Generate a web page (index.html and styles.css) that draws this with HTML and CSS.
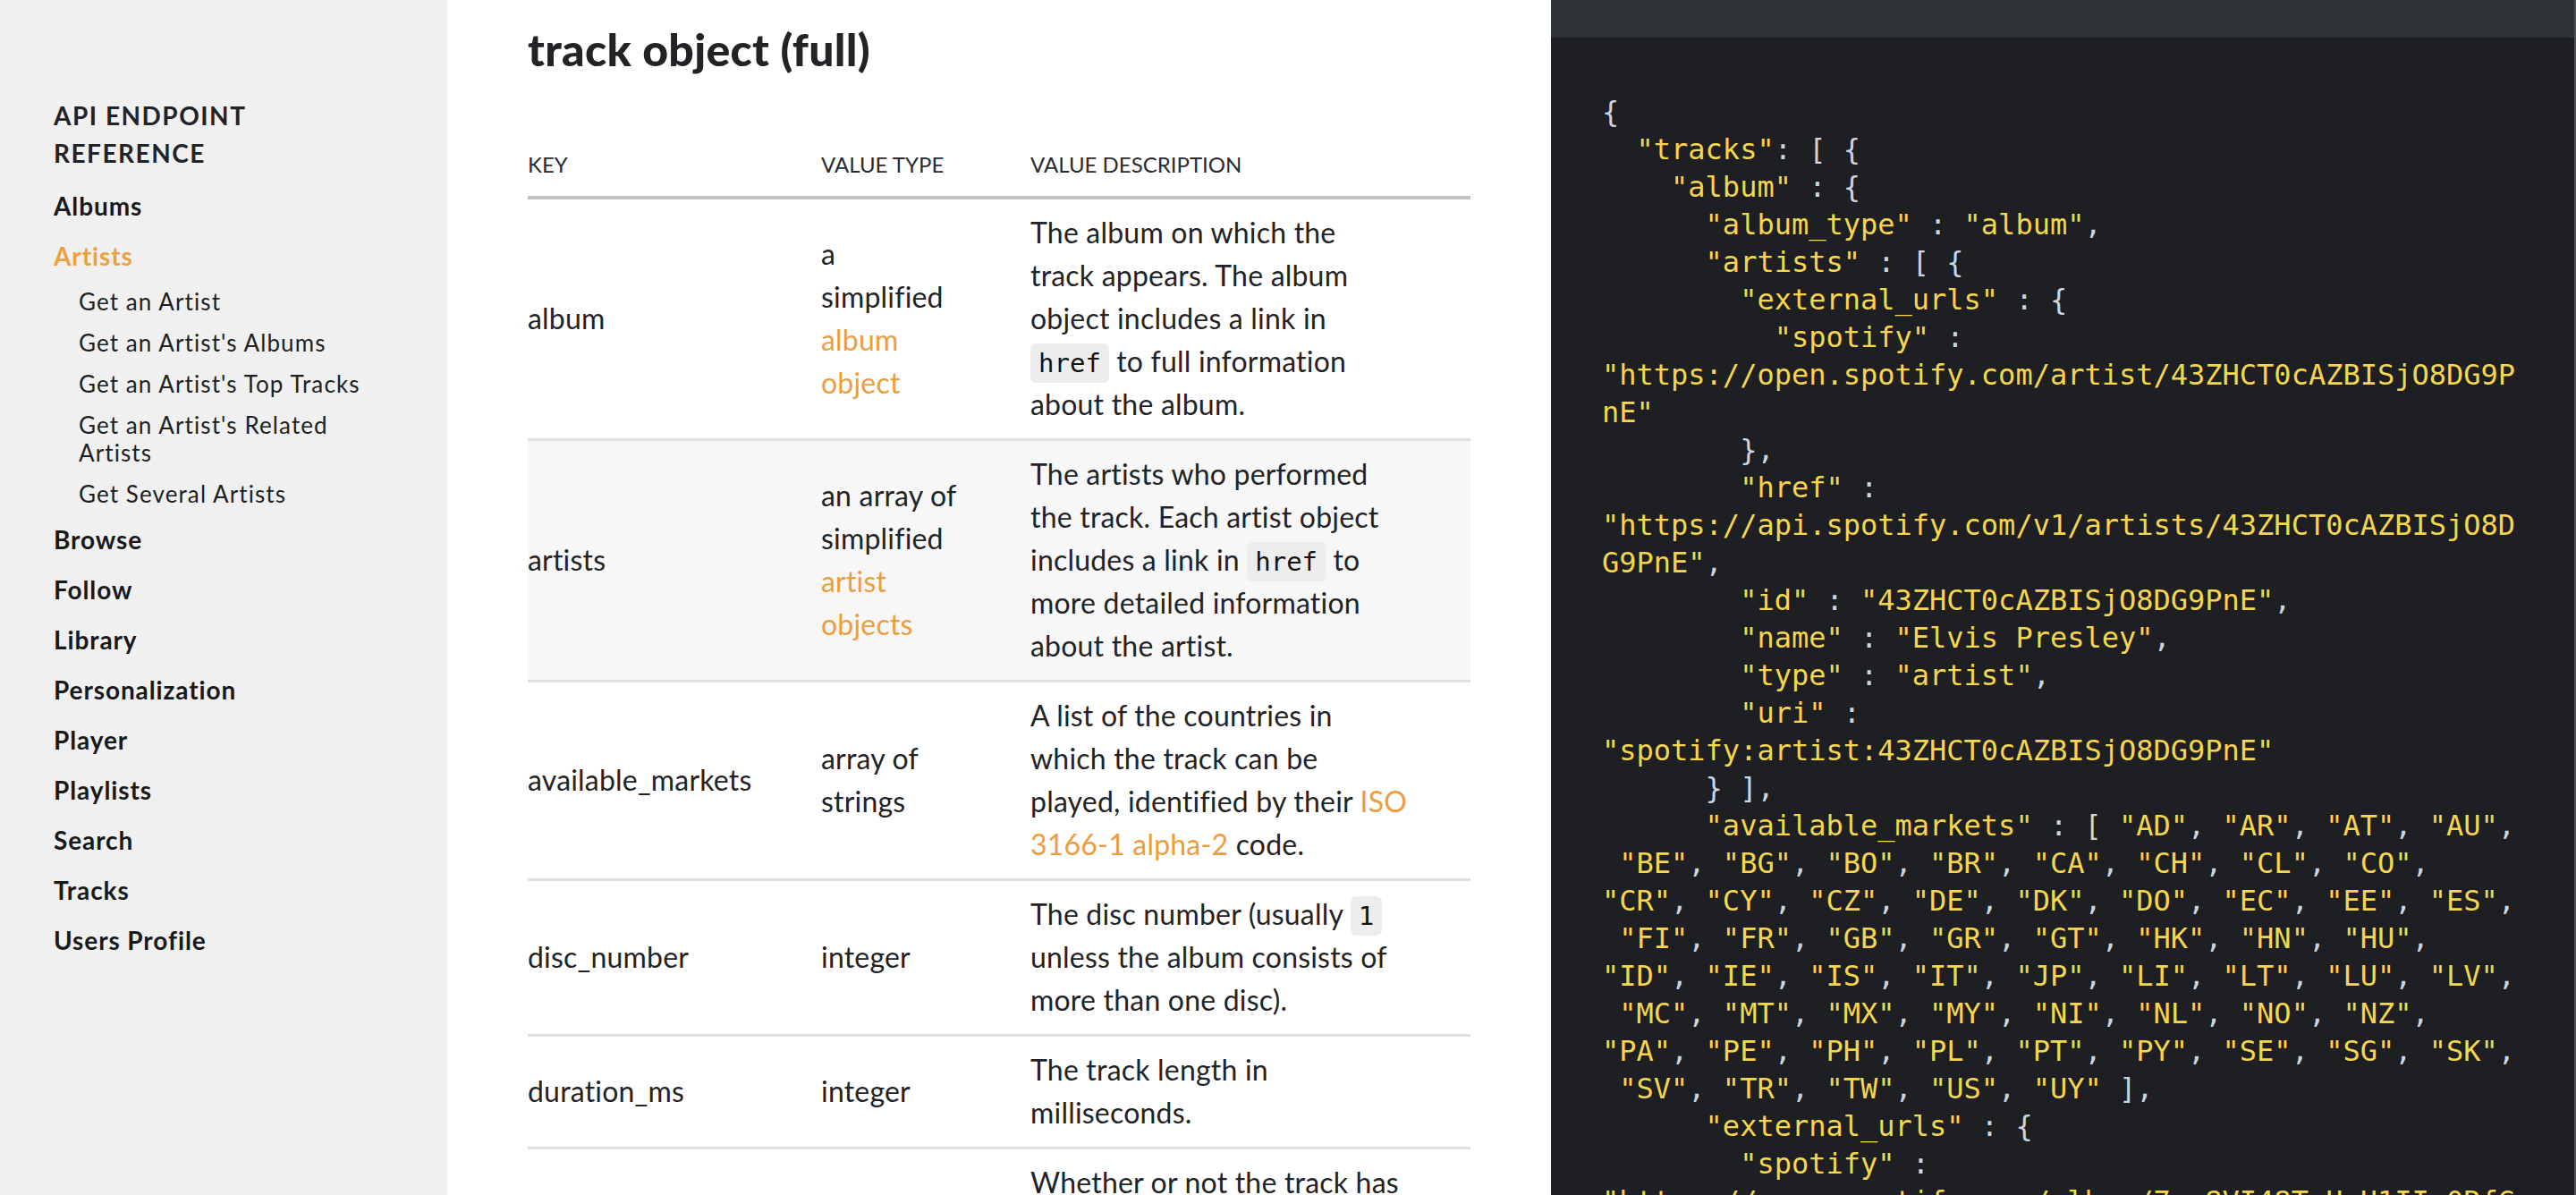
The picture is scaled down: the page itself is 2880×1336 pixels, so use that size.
FILE: index.html
```html
<!DOCTYPE html>
<html lang="en">
<head>
<meta charset="utf-8">
<title>track object (full)</title>
<link rel="stylesheet" href="styles.css">
</head>
<body>
<div class="page">
  <aside class="sidebar">
    <h2 class="side-title">API ENDPOINT REFERENCE</h2>
    <ul class="nav">
      <li><a class="nav-link">Albums</a></li>
      <li class="active"><a class="nav-link">Artists</a>
        <ul class="subnav">
          <li><a class="sub-link">Get an Artist</a></li>
          <li><a class="sub-link">Get an Artist's Albums</a></li>
          <li><a class="sub-link">Get an Artist's Top Tracks</a></li>
          <li><a class="sub-link">Get an Artist's Related Artists</a></li>
          <li><a class="sub-link">Get Several Artists</a></li>
        </ul>
      </li>
      <li><a class="nav-link">Browse</a></li>
      <li><a class="nav-link">Follow</a></li>
      <li><a class="nav-link">Library</a></li>
      <li><a class="nav-link">Personalization</a></li>
      <li><a class="nav-link">Player</a></li>
      <li><a class="nav-link">Playlists</a></li>
      <li><a class="nav-link">Search</a></li>
      <li><a class="nav-link">Tracks</a></li>
      <li><a class="nav-link">Users Profile</a></li>
    </ul>
  </aside>

  <main class="main">
    <h1 class="title">track object (full)</h1>
    <table class="props">
      <colgroup>
        <col class="c-key">
        <col class="c-type">
        <col class="c-desc">
      </colgroup>
      <thead>
        <tr><th>Key</th><th>Value type</th><th>Value description</th></tr>
      </thead>
      <tbody>
        <tr>
          <td>album</td>
          <td>a<br>simplified<br><a class="link">album<br>object</a></td>
          <td>The album on which the<br>track appears. The album<br>object includes a link in<br><code class="ic">href</code> to full information<br>about the album.</td>
        </tr>
        <tr class="alt">
          <td>artists</td>
          <td>an array of<br>simplified<br><a class="link">artist<br>objects</a></td>
          <td>The artists who performed<br>the track. Each artist object<br>includes a link in <code class="ic">href</code> to<br>more detailed information<br>about the artist.</td>
        </tr>
        <tr>
          <td>available_markets</td>
          <td>array of<br>strings</td>
          <td>A list of the countries in<br>which the track can be<br>played, identified by their <a class="link">ISO<br>3166-1 alpha-2</a> code.</td>
        </tr>
        <tr>
          <td>disc_number</td>
          <td>integer</td>
          <td>The disc number (usually <code class="ic">1</code><br>unless the album consists of<br>more than one disc).</td>
        </tr>
        <tr>
          <td>duration_ms</td>
          <td>integer</td>
          <td>The track length in<br>milliseconds.</td>
        </tr>
        <tr>
          <td>explicit</td>
          <td>boolean</td>
          <td>Whether or not the track has<br>explicit lyrics (<code class="ic">true</code> = yes<br>it does; <code class="ic">false</code> = no it<br>does not OR unknown).</td>
        </tr>
      </tbody>
    </table>
  </main>

  <section class="code">
    <div class="code-bar"></div>
    <div class="json">
      <div class="ln">{</div>
      <div class="ln">  <span class="s">"tracks"</span>: [ {</div>
      <div class="ln">    <span class="s">"album"</span> : {</div>
      <div class="ln">      <span class="s">"album_type"</span> : <span class="s">"album"</span>,</div>
      <div class="ln">      <span class="s">"artists"</span> : [ {</div>
      <div class="ln">        <span class="s">"external_urls"</span> : {</div>
      <div class="ln">          <span class="s">"spotify"</span> :</div>
      <div class="ln"><span class="s">"https://open.spotify.com/artist/43ZHCT0cAZBISjO8DG9P</span></div>
      <div class="ln"><span class="s">nE"</span></div>
      <div class="ln">        },</div>
      <div class="ln">        <span class="s">"href"</span> :</div>
      <div class="ln"><span class="s">"https://api.spotify.com/v1/artists/43ZHCT0cAZBISjO8D</span></div>
      <div class="ln"><span class="s">G9PnE"</span>,</div>
      <div class="ln">        <span class="s">"id"</span> : <span class="s">"43ZHCT0cAZBISjO8DG9PnE"</span>,</div>
      <div class="ln">        <span class="s">"name"</span> : <span class="s">"Elvis Presley"</span>,</div>
      <div class="ln">        <span class="s">"type"</span> : <span class="s">"artist"</span>,</div>
      <div class="ln">        <span class="s">"uri"</span> :</div>
      <div class="ln"><span class="s">"spotify:artist:43ZHCT0cAZBISjO8DG9PnE"</span></div>
      <div class="ln">      } ],</div>
      <div class="ln">      <span class="s">"available_markets"</span> : [ <span class="s">"AD"</span>, <span class="s">"AR"</span>, <span class="s">"AT"</span>, <span class="s">"AU"</span>,</div>
      <div class="ln"> <span class="s">"BE"</span>, <span class="s">"BG"</span>, <span class="s">"BO"</span>, <span class="s">"BR"</span>, <span class="s">"CA"</span>, <span class="s">"CH"</span>, <span class="s">"CL"</span>, <span class="s">"CO"</span>,</div>
      <div class="ln"><span class="s">"CR"</span>, <span class="s">"CY"</span>, <span class="s">"CZ"</span>, <span class="s">"DE"</span>, <span class="s">"DK"</span>, <span class="s">"DO"</span>, <span class="s">"EC"</span>, <span class="s">"EE"</span>, <span class="s">"ES"</span>,</div>
      <div class="ln"> <span class="s">"FI"</span>, <span class="s">"FR"</span>, <span class="s">"GB"</span>, <span class="s">"GR"</span>, <span class="s">"GT"</span>, <span class="s">"HK"</span>, <span class="s">"HN"</span>, <span class="s">"HU"</span>,</div>
      <div class="ln"><span class="s">"ID"</span>, <span class="s">"IE"</span>, <span class="s">"IS"</span>, <span class="s">"IT"</span>, <span class="s">"JP"</span>, <span class="s">"LI"</span>, <span class="s">"LT"</span>, <span class="s">"LU"</span>, <span class="s">"LV"</span>,</div>
      <div class="ln"> <span class="s">"MC"</span>, <span class="s">"MT"</span>, <span class="s">"MX"</span>, <span class="s">"MY"</span>, <span class="s">"NI"</span>, <span class="s">"NL"</span>, <span class="s">"NO"</span>, <span class="s">"NZ"</span>,</div>
      <div class="ln"><span class="s">"PA"</span>, <span class="s">"PE"</span>, <span class="s">"PH"</span>, <span class="s">"PL"</span>, <span class="s">"PT"</span>, <span class="s">"PY"</span>, <span class="s">"SE"</span>, <span class="s">"SG"</span>, <span class="s">"SK"</span>,</div>
      <div class="ln"> <span class="s">"SV"</span>, <span class="s">"TR"</span>, <span class="s">"TW"</span>, <span class="s">"US"</span>, <span class="s">"UY"</span> ],</div>
      <div class="ln">      <span class="s">"external_urls"</span> : {</div>
      <div class="ln">        <span class="s">"spotify"</span> :</div>
      <div class="ln"><span class="s">"https://open.spotify.com/album/7xe8VI48TxUpU1IIo0RfG</span></div>
      <div class="ln"><span class="s">i"</span></div>
      <div class="ln">      },</div>
    </div>
  </section>
</div>
</body>
</html>
```

FILE: styles.css
```css
* {
  box-sizing: border-box;
  margin: 0;
  padding: 0;
}

html,
body {
  margin: 0;
  height: 100%;
  overflow: hidden;
}

body {
  font-family: Lato, "Noto Sans", sans-serif;
  color: #222326;
  background: #ffffff;
}

.page {
  display: flex;
  height: 1336px;
  overflow: hidden;
}

/* ---------- sidebar ---------- */
.sidebar {
  flex: none;
  width: 500px;
  background: #f0f0f0;
  padding: 108px 70px 0 60px;
}

.side-title {
  max-width: 320px;
  font-size: 28px;
  font-weight: 700;
  letter-spacing: 1.5px;
  line-height: 42px;
  color: #222326;
  margin-bottom: 10px;
}

.nav,
.subnav {
  list-style: none;
}

.nav-link {
  display: block;
  font-size: 28px;
  font-weight: 700;
  letter-spacing: 0.9px;
  line-height: 32px;
  padding: 12px 0;
  color: #18191b;
}

.active > .nav-link {
  color: #eba13f;
}

.subnav {
  padding-left: 28px;
}

.sub-link {
  display: block;
  font-size: 26px;
  font-weight: 400;
  letter-spacing: 1.1px;
  line-height: 31px;
  padding: 7.5px 0;
  color: #1e1f22;
}

/* ---------- main ---------- */
.main {
  flex: none;
  width: 1234px;
  padding: 27px 90px 0;
  overflow: hidden;
}

.title {
  font-size: 50px;
  font-weight: 900;
  letter-spacing: 0.3px;
  line-height: 56px;
  color: #222326;
  margin-bottom: 66px;
}

.props {
  width: 100%;
  border-collapse: collapse;
  table-layout: fixed;
}

.c-key { width: 328px; }
.c-type { width: 234px; }
.c-desc { width: 492px; }

.props th {
  text-align: left;
  font-weight: 400;
  font-size: 24px;
  line-height: 30px;
  text-transform: uppercase;
  color: #2a2b2e;
  padding: 20px 0;
  border-bottom: 4px solid #c3c4c7;
}

.props td {
  font-size: 32px;
  line-height: 48px;
  letter-spacing: 0.2px;
  color: #222326;
  padding: 13px 20px 14px 0;
  border-bottom: 3px solid #e0e0e0;
  vertical-align: middle;
  white-space: nowrap;
}

.props tr.alt td {
  background: #f7f7f7;
}

.link {
  color: #ec9d3d;
}

.ic {
  font-family: "DejaVu Sans Mono", monospace;
  font-size: 29px;
  line-height: 1;
  letter-spacing: 0;
  color: #111111;
  background: #ededed;
  border-radius: 6px;
  padding: 5px 9px;
}

/* ---------- code panel ---------- */
.code {
  flex: 1;
  min-width: 0;
  display: flex;
  flex-direction: column;
  background: #1d1f22;
  border-right: 2px solid #4d5054;
}

.code-bar {
  flex: none;
  height: 42px;
  background: #2f3236;
}

.json {
  padding: 62px 57px 0;
  font-family: "DejaVu Sans Mono", monospace;
  font-size: 32px;
  line-height: 42px;
  color: #cdd6e0;
}

.ln {
  white-space: pre;
  height: 42px;
}

.s {
  color: #f5d64d;
}
```
